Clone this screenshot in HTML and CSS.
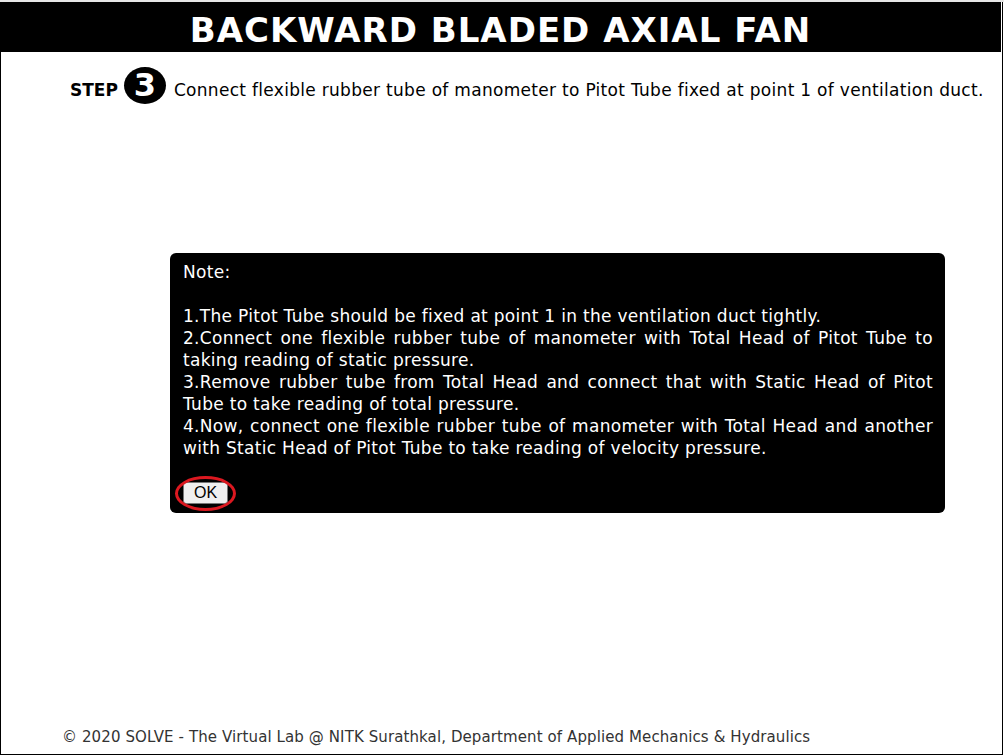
FILE: index.html
```html
<!DOCTYPE html>
<html>
<head>
<meta charset="utf-8">
<link rel="stylesheet" href="styles.css">
</head>
<body>
<div class="topline"></div>
<div class="frame">
  <header class="title-bar"><h1>BACKWARD BLADED AXIAL FAN</h1></header>
  <div class="step-row">
    <span class="step-label">STEP</span>
    <span class="step-num">3</span>
    <span class="step-text">Connect flexible rubber tube of manometer to Pitot Tube fixed at point 1 of ventilation duct.</span>
  </div>
  <div class="note-box">
    <p class="note-line">Note:</p>
    <p class="note-line blank">&nbsp;</p>
    <p class="note-para">1.The Pitot Tube should be fixed at point 1 in the ventilation duct tightly.</p>
    <p class="note-para">2.Connect one flexible rubber tube of manometer with Total Head of Pitot Tube to taking reading of static pressure.</p>
    <p class="note-para">3.Remove rubber tube from Total Head and connect that with Static Head of Pitot Tube to take reading of total pressure.</p>
    <p class="note-para">4.Now, connect one flexible rubber tube of manometer with Total Head and another with Static Head of Pitot Tube to take reading of velocity pressure.</p>
    <div class="ok-wrap">
      <button class="ok-btn">OK</button>
      <span class="ok-ring"></span>
    </div>
  </div>
  <footer class="footer">© 2020 SOLVE - The Virtual Lab @ NITK Surathkal, Department of Applied Mechanics &amp; Hydraulics</footer>
</div>
</body>
</html>
```
FILE: styles.css
```css
html, body {
  margin: 0;
  padding: 0;
  background: #fff;
}
body {
  font-family: "DejaVu Sans", Verdana, sans-serif;
  width: 1004px;
  height: 756px;
  overflow: hidden;
}
.topline {
  height: 2px;
  background: #e6e6e6;
}
.frame {
  box-sizing: border-box;
  width: 1003px;
  height: 753px;
  border: 1px solid #000;
  border-top: none;
  display: flex;
  flex-direction: column;
}
.title-bar {
  margin-left: -1px;
  width: 1001px;
  height: 50px;
  background: #000;
  display: flex;
  align-items: center;
  justify-content: center;
}
.title-bar h1 {
  margin: 0;
  padding-top: 6px;
  color: #fff;
  font-family: "DejaVu Sans", Verdana, sans-serif;
  font-weight: bold;
  font-size: 34px;
  line-height: 40px;
  letter-spacing: 1px;
}
.step-row {
  display: flex;
  align-items: baseline;
  margin-top: 15px;
  padding-left: 69px;
}
.step-label {
  font-weight: bold;
  font-size: 17px;
  color: #000;
  margin-right: 6px;
}
.step-num {
  width: 42px;
  height: 37px;
  border-radius: 50%;
  background: #000;
  color: #fff;
  font-size: 32px;
  font-weight: bold;
  line-height: 37px;
  text-align: center;
  margin-right: 8px;
}
.step-text {
  font-size: 17px;
  letter-spacing: 0.3px;
  color: #000;
}
.note-box {
  margin: 149px 0 0 169px;
  width: 775px;
  box-sizing: border-box;
  background: #000;
  color: #fff;
  border-radius: 6px;
  padding: 8px 12px 9px 13px;
  font-size: 17px;
  line-height: 22px;
  letter-spacing: 0.3px;
}
.note-line, .note-para {
  margin: 0;
}
.note-para {
  text-align: justify;
}
.ok-wrap {
  position: relative;
  margin-top: 23px;
  height: 22px;
}
.ok-btn {
  display: block;
  font-family: "Liberation Sans", Arial, sans-serif;
  font-size: 16px;
  letter-spacing: 0;
  width: 45px;
  height: 22px;
  padding: 0;
  background: #efefef;
  border: 1px solid #767676;
  border-radius: 3px;
  color: #000;
}
.ok-ring {
  position: absolute;
  left: -8px;
  top: -6px;
  width: 55px;
  height: 29px;
  border: 3px solid #dc1820;
  border-radius: 50%;
}
.footer {
  margin-top: auto;
  padding: 0 0 8px 61px;
  font-size: 15px;
  letter-spacing: 0.1px;
  color: #333;
}
```
